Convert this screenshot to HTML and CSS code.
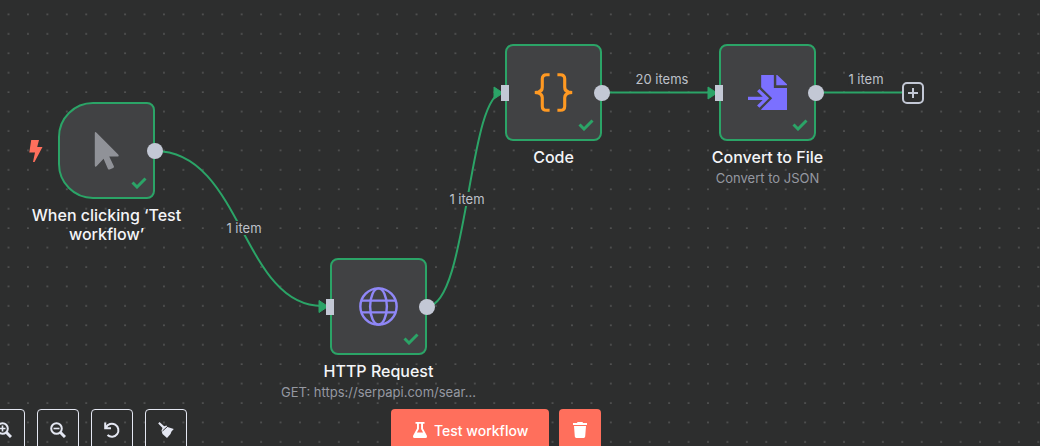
FILE: index.html
```html
<!DOCTYPE html>
<html lang="en">
<head>
<meta charset="utf-8">
<title>Workflow editor</title>
<link rel="stylesheet" href="styles.css">
</head>
<body>
<main class="canvas">
  <svg class="edges" aria-hidden="true">
    <defs>
      <pattern id="grid" width="20" height="20" patternUnits="userSpaceOnUse" patternTransform="translate(-1.2 4.6) scale(.9715)">
        <circle cx="10" cy="10" r=".6"/>
      </pattern>
      <symbol id="check" viewBox="0 0 16 12"><path d="M1.5 5.5 6 10l8.5-8.5" fill="none" stroke="currentColor" stroke-width="3"/></symbol>
    </defs>
    <rect class="dots" width="100%" height="100%" fill="url(#grid)"/>
    <g class="lines">
      <path d="M155 151C242 151 242 306 322 306"/>
      <path d="M427 306.500C468 306.500 468 92.500 503 92.500"/>
      <path d="M602 92.500H710"/>
      <path d="M816 92.500H902"/>
    </g>
    <g class="arrows">
      <path d="M319 300.500 328 306.500 319 312.500Z"/>
      <path d="M494 87 503 93 494 99Z"/>
      <path d="M708 87 717 93 708 99Z"/>
    </g>
  </svg>

  <span class="edge-label edge-a">1 item</span>
  <span class="edge-label edge-b">1 item</span>
  <span class="edge-label edge-c">20 items</span>
  <span class="edge-label edge-d">1 item</span>

  <svg class="bolt" viewBox="0 0 14 22" aria-hidden="true"><path d="M2.200 0H10L8.200 7H13.500L5.500 22H4L6 12.500H.3Z"/></svg>

  <section class="node trigger">
    <div class="box">
      <svg class="icon" viewBox="0 0 40 40"><path fill="#909298" d="M8 2.500Q8 .2 9.800 1.800L32 24Q33.400 26 31 26.200H22.800L27.600 36.200Q28 37.500 26.800 38L23.200 39.400Q22 39.800 21.400 38.600L17 28.500 10 36Q8 37.500 8 35Z"/></svg>
      <svg class="check"><use href="#check"/></svg>
      <i class="out"></i>
    </div>
    <h2>When clicking ‘Test workflow’</h2>
  </section>

  <section class="node http">
    <div class="box">
      <svg class="icon" viewBox="0 0 40 40"><g fill="none" stroke="#8f87f7" stroke-width="2.500"><circle cx="20" cy="20" r="18.600"/><ellipse cx="20" cy="20" rx="8.600" ry="18.600"/><path d="M2.500 14H37.500M2.500 26H37.500"/></g></svg>
      <svg class="check"><use href="#check"/></svg>
      <i class="in"></i><i class="out"></i>
    </div>
    <h2>HTTP Request</h2>
    <p>GET: https://serpapi.com/sear...</p>
  </section>

  <section class="node code">
    <div class="box">
      <svg class="icon" viewBox="0 0 40 40"><path fill="none" stroke="#ff9922" stroke-width="3.200" d="M16 1.800H13Q8.500 1.800 8.500 6V14.500Q8.500 18.500 4.500 19.500L1 20L4.500 20.500Q8.500 21.500 8.500 25.500V34Q8.500 38.200 13 38.200H16M24 1.800H27Q31.500 1.800 31.500 6V14.500Q31.500 18.500 35.500 19.500L39 20L35.500 20.500Q31.500 21.500 31.500 25.500V34Q31.500 38.200 27 38.200H24"/></svg>
      <svg class="check"><use href="#check"/></svg>
      <i class="in"></i><i class="out"></i>
    </div>
    <h2>Code</h2>
  </section>

  <section class="node convert">
    <div class="box">
      <svg class="icon" viewBox="0 0 40 40"><path fill="#7b70ff" d="M13.500 2H26.500V15.500H40V38H13.500ZM29 2H30L40 11.500V12.500H29Z"/><path d="M0 26H20M10.500 17 19.500 26 10.500 35" fill="none" stroke="#414244" stroke-width="7.500"/><path d="M0 26H19M10.500 17.500 19.200 26 10.500 34.500" fill="none" stroke="#7b70ff" stroke-width="3.400"/></svg>
      <svg class="check"><use href="#check"/></svg>
      <i class="in"></i><i class="out"></i>
    </div>
    <h2>Convert to File</h2>
    <p>Convert to JSON</p>
  </section>

  <button class="add" aria-label="Add node"><svg viewBox="0 0 12 12"><path d="M6 1V11M1 6H11"/></svg></button>

  <div class="toolbar view-controls">
    <button class="tool" aria-label="Zoom in"><svg viewBox="0 0 16 16"><circle cx="6.500" cy="6.500" r="5.300"/><path d="M10.500 10.500 15 15" stroke-width="3"/><path d="M3.500 6.500H9.500M6.500 3.500V9.500" stroke-width="1.600"/></svg></button>
    <button class="tool" aria-label="Zoom out"><svg viewBox="0 0 16 16"><circle cx="6.500" cy="6.500" r="5.300"/><path d="M10.500 10.500 15 15" stroke-width="3"/><path d="M3.500 6.500H9.500" stroke-width="1.600"/></svg></button>
    <button class="tool" aria-label="Reset zoom"><svg viewBox="0 0 16 16"><path d="M2 5.500A6.500 6.500 0 1 1 3.500 13M1.200 .5V6.200H7"/></svg></button>
    <button class="tool" aria-label="Tidy up"><svg viewBox="0 0 16 16"><path class="solid" d="M1.500 0 6.200 4.200 8.500 3.500 9.500 5 15.800 7 13.500 9.500 12.500 12 9 16 4.500 12 3.500 8.500 4.500 6 .2 1.500Z"/><path class="cut" d="M4.500 9 10 4"/></svg></button>
  </div>

  <div class="toolbar run-controls">
    <button class="primary"><svg viewBox="0 0 16 16"><path d="M3.500 0H12.500V1.800H11V6.500L14.800 13.500Q15.500 16 13.500 16H2.500Q.5 16 1.200 13.500L5 6.500V1.800H3.500ZM6.900 1.800V7L4.900 10.500H11.100L9.100 7V1.800Z" fill-rule="evenodd"/></svg>Test workflow</button>
    <button class="primary square" aria-label="Delete execution data"><svg viewBox="0 0 16 16"><path d="M5.500 0H10.500L11 1H15V3H1V1H5ZM2 4H14L13.200 14.600Q13 16 11.800 16H4.200Q3 16 2.800 14.600Z"/></svg></button>
  </div>
</main>
</body>
</html>
```
FILE: styles.css
```css
* { box-sizing: border-box; }
body { margin: 0; font-family: Inter, "Liberation Sans", sans-serif; background: #2d2e2e; }
button { font: inherit; padding: 0; cursor: pointer; }

.canvas { position: relative; min-height: 100vh; overflow: hidden; }
.edges { position: absolute; inset: 0; width: 100%; height: 100%; }
#grid circle { fill: #b4b4b4; }
.lines { fill: none; stroke: #2ba467; stroke-width: 2; }
.arrows { fill: #2ba467; stroke: #2ba467; stroke-linejoin: round; }

.edge-label { position: absolute; transform: translate(-50%, -50%); font-size: 13px; line-height: 14px; color: #bec1c9; background: #2d2e2e; white-space: nowrap; }
.edge-a { left: 244px; top: 228px; }
.edge-b { left: 467px; top: 199px; }
.edge-c { left: 662px; top: 79px; }
.edge-d { left: 866px; top: 79px; }

.node { position: absolute; width: 97px; display: flex; flex-direction: column; align-items: center; text-align: center; }
.trigger { left: 58px; top: 102px; }
.http { left: 330px; top: 258px; }
.code { left: 505px; top: 44px; }
.convert { left: 719px; top: 44px; }
.box { position: relative; width: 97px; height: 97px; border: 2px solid #2ba467; border-radius: 8px; background: #414244; display: grid; place-items: center; }
.trigger .box { border-radius: 35px 8px 8px 35px; }
.icon { width: 39px; height: 39px; }
.check { position: absolute; right: 6px; bottom: 8px; width: 16px; height: 12px; color: #2ba467; }
.in, .out { position: absolute; background: #c3c8d5; }
.in { left: -6px; top: 39px; width: 8px; height: 16px; }
.out { right: -10px; top: 39px; width: 16px; height: 16px; border-radius: 50%; }
.node h2 { margin: 7px 0 0; width: 160px; font-size: 16px; font-weight: 500; line-height: 19px; color: #f4f5f8; }
.node p { margin: 1px 0 0; width: 220px; font-size: 13px; line-height: 20px; color: #9598a1; white-space: nowrap; }
.bolt { position: absolute; left: 29px; top: 140px; width: 14px; height: 22px; fill: #ff6f5c; }

.add { position: absolute; left: 902px; top: 82px; width: 22px; height: 22px; display: grid; place-items: center; border: 2px solid #c3c8d5; border-radius: 5px; background: #2d2e2e; }
.add svg { width: 12px; height: 12px; stroke: #c3c8d5; stroke-width: 2; }

.toolbar { position: absolute; bottom: -5px; display: flex; }
.view-controls { left: -17px; gap: 12px; }
.run-controls { left: 391px; gap: 10px; }
.tool { width: 42px; height: 42px; display: grid; place-items: center; border: 1px solid #e4e7f2; border-radius: 4px; background: transparent; }
.tool svg { width: 16px; height: 16px; fill: none; stroke: #e4e7f2; stroke-width: 2; }
.tool .solid { fill: #e4e7f2; stroke: none; }
.tool .cut { stroke: #2d2e2e; stroke-width: 1; }
.primary { height: 42px; padding: 0 21px; display: flex; align-items: center; gap: 6px; border: 0; border-radius: 4px; background: #ff6f5c; color: #fff; font-size: 14px; font-weight: 500; }
.primary svg { width: 16px; height: 16px; fill: #fff; }
.square { padding: 0 13px; }
```
